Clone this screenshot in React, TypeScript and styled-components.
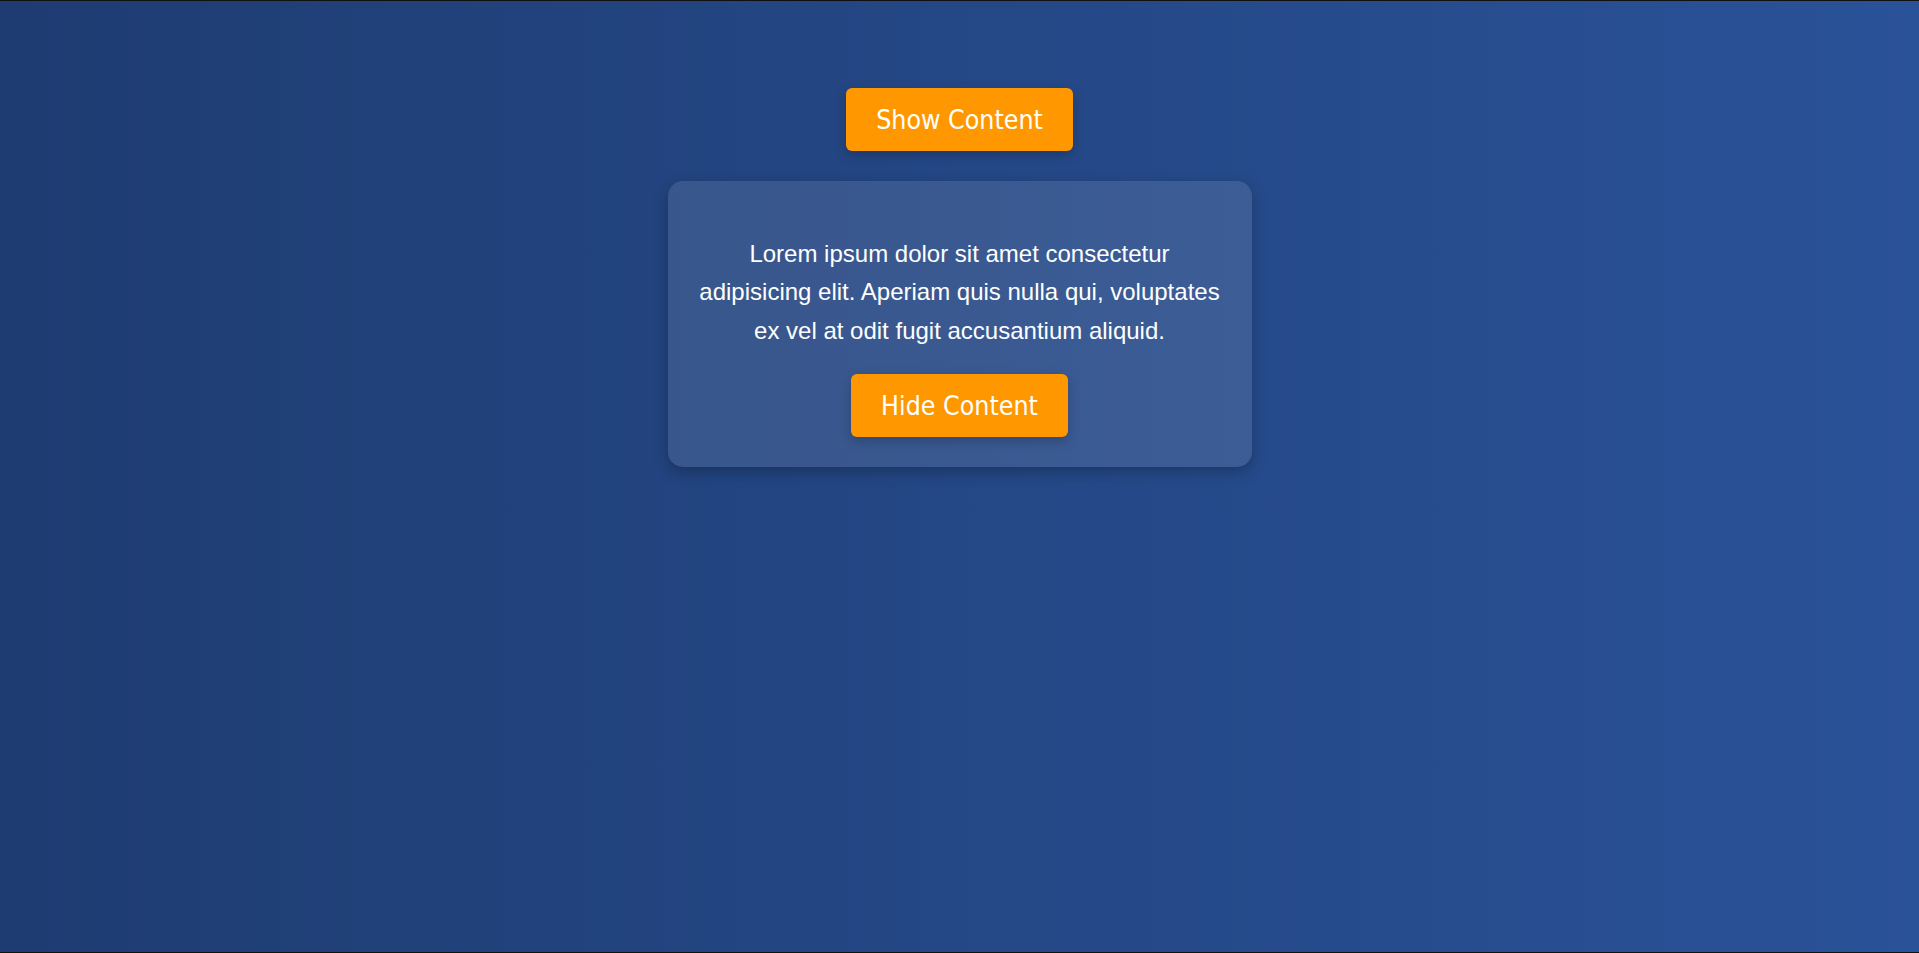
import React, { useState } from "react";
import styled, { createGlobalStyle } from "styled-components";

const GlobalStyle = createGlobalStyle`
  * { box-sizing: border-box; }
  html, body { margin: 0; padding: 0; }
  body {
    background: #111;
    font-family: "Liberation Sans", Arial, sans-serif;
  }
`;

const Page = styled.div`
  margin: 1px 0;
  min-height: calc(100vh - 2px);
  background: linear-gradient(to right, #1e3c72, #2a5298);
  display: flex;
  flex-direction: column;
  align-items: center;
  padding-top: 87px;
  gap: 30px;
`;

const ActionButton = styled.button`
  background: #ff9800;
  color: #ffffff;
  border: none;
  border-radius: 6px;
  padding: 15px 30px;
  font-family: "DejaVu Sans Condensed", "DejaVu Sans", sans-serif;
  font-size: 26.5px;
  line-height: 33px;
  cursor: pointer;
  box-shadow: 0 4px 12px rgba(0, 0, 0, 0.22);
`;

const Card = styled.div`
  width: 584px;
  padding: 30px;
  border-radius: 15px;
  background: rgba(255, 255, 255, 0.1);
  box-shadow: 0 5px 15px rgba(0, 0, 0, 0.25);
  display: flex;
  flex-direction: column;
  align-items: center;
  text-align: center;
`;

const Text = styled.p`
  margin: 24px 0;
  color: #ffffff;
  font-family: "Liberation Sans", Arial, sans-serif;
  font-size: 24px;
  line-height: 1.6;
`;

export default function App() {
  const [open, setOpen] = useState(true);
  return (
    <>
      <GlobalStyle />
      <Page>
        <ActionButton onClick={() => setOpen(true)}>Show Content</ActionButton>
        {open && (
          <Card>
            <Text>
              Lorem ipsum dolor sit amet consectetur adipisicing elit. Aperiam quis nulla qui, voluptates ex vel at odit fugit accusantium aliquid.
            </Text>
            <ActionButton onClick={() => setOpen(false)}>Hide Content</ActionButton>
          </Card>
        )}
      </Page>
    </>
  );
}
